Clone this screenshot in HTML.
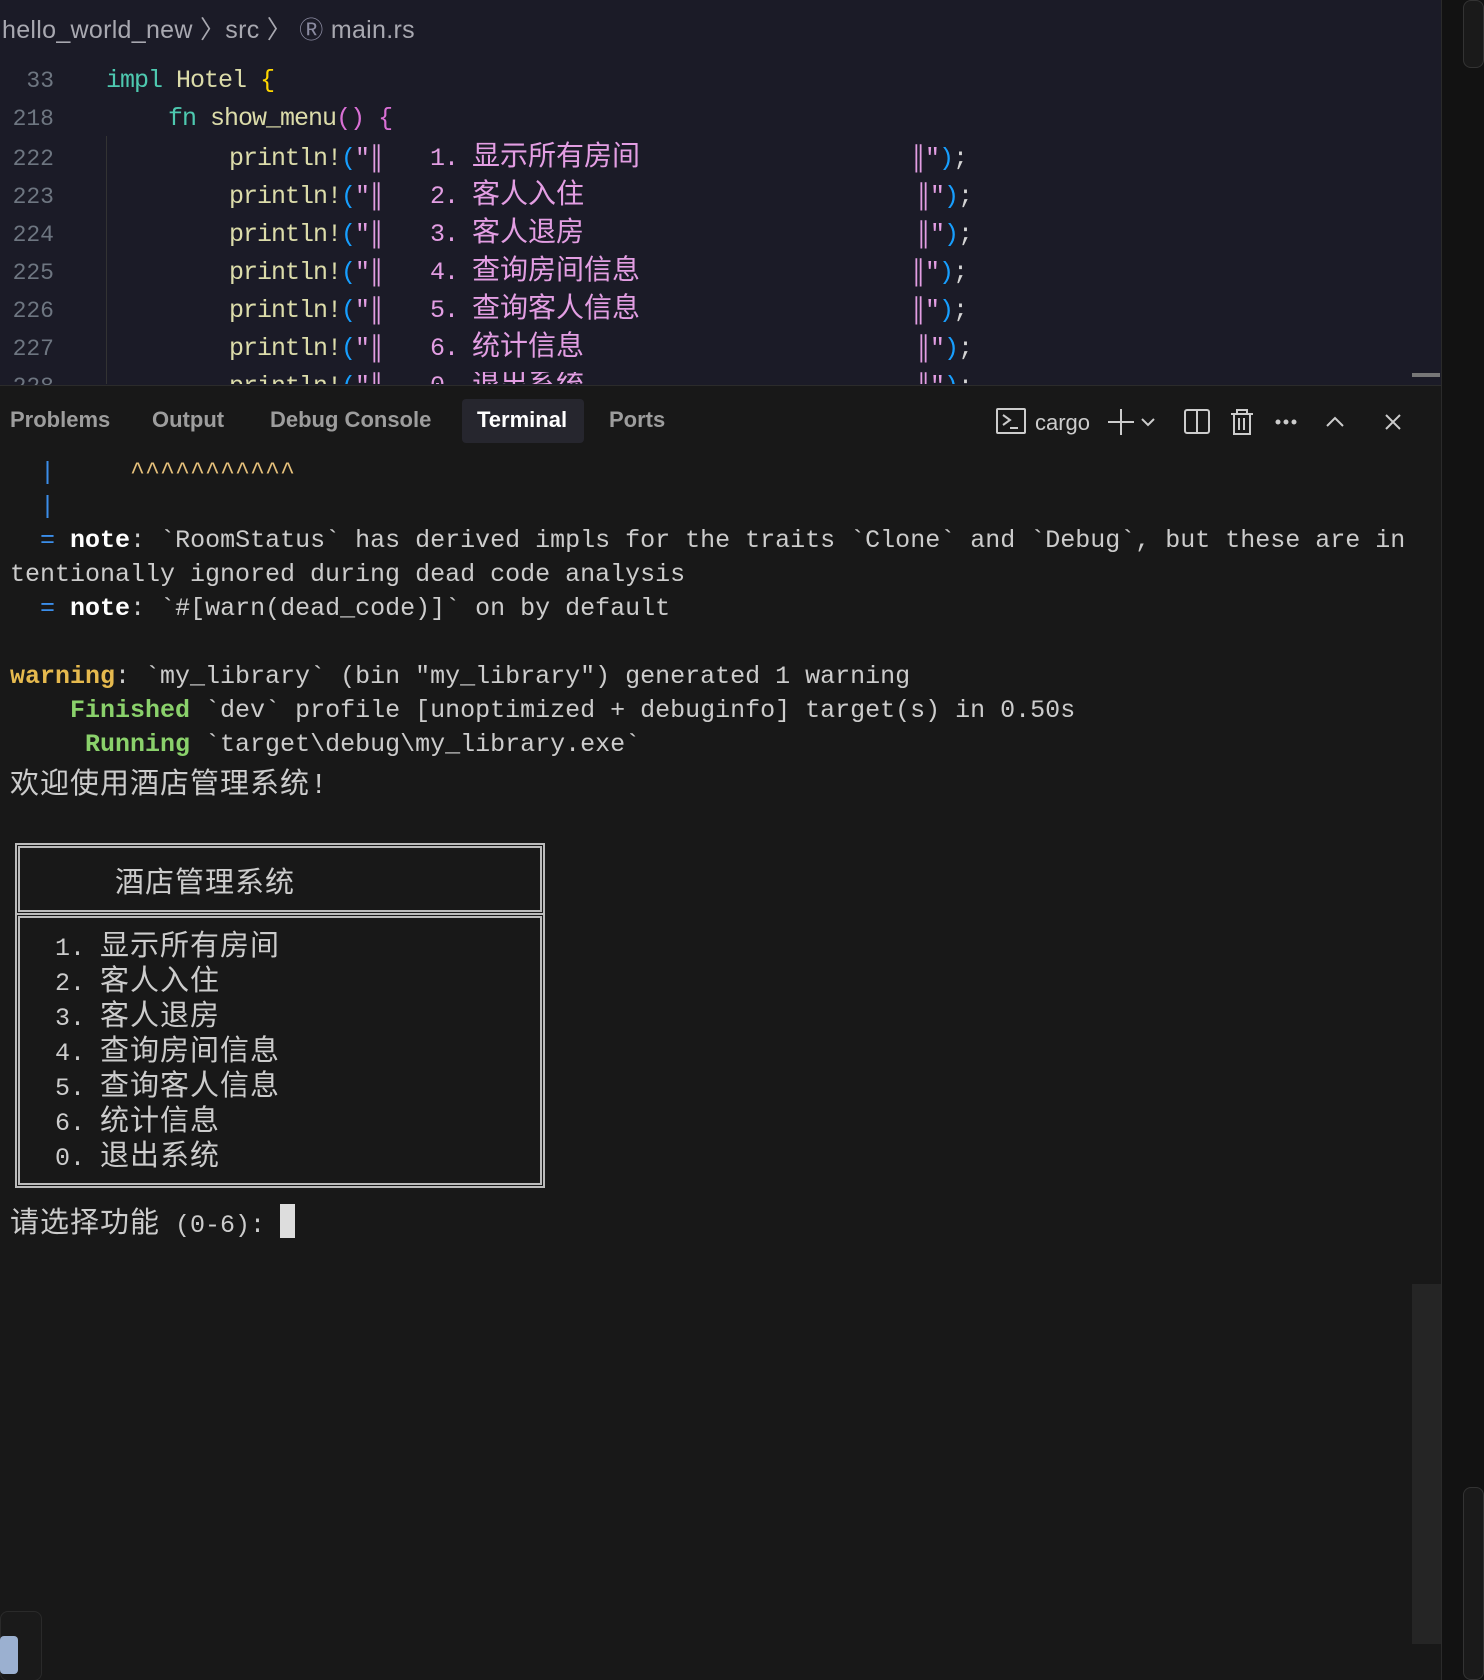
<!DOCTYPE html>
<html><head><meta charset="utf-8"><style>
*{margin:0;padding:0;box-sizing:border-box}
html,body{width:1484px;height:1680px;overflow:hidden;background:#181818;}
body{position:relative;font-family:"Liberation Mono","Noto Sans CJK SC",monospace;color:#cccccc}
.ab{position:absolute;white-space:pre}
#editor{position:absolute;left:0;top:0;width:1441px;height:385px;background:#1b1b27}
.crumb{font-family:"Liberation Sans","Noto Sans CJK SC",sans-serif;font-size:25px;color:#a8a8b0;top:10px;left:2px;letter-spacing:0.3px}
.ln{font-size:23px;color:#6e7681;width:54px;text-align:right;left:0;line-height:36px}
.code{font-size:25px;letter-spacing:-1px;line-height:36px}
.k{color:#4ec9b0}.y{color:#dcdcaa}.g{color:#ffd700}.p{color:#da70d6}.b{color:#179fff}.s{color:#e39ee3}.w{color:#d4d4d4}
.cc{font-size:28px;letter-spacing:0}
#panel{position:absolute;left:0;top:385px;width:1441px;height:1295px;background:#181818;border-top:1px solid #2b2b2b}
.tab{font-family:"Liberation Sans",sans-serif;font-size:22px;color:#9d9d9d;top:21px;font-weight:bold}
.t{font-size:25px;left:10px}
.cj{font-size:29px;letter-spacing:1px}
.bl{color:#3b8eea}.yl{color:#e5c07b}.gr{color:#8ad16b;font-weight:bold}
</style></head><body>
<div id="editor">
<div class="ab crumb">hello_world_new 〉src 〉 <span style="font-size:24px;color:#8a8aa0">Ⓡ</span> main.rs</div>
<div class="ab ln" style="top:63px">33</div>
<div class="ab ln" style="top:101px">218</div>
<div class="ab ln" style="top:141px">222</div>
<div class="ab ln" style="top:179px">223</div>
<div class="ab ln" style="top:217px">224</div>
<div class="ab ln" style="top:255px">225</div>
<div class="ab ln" style="top:293px">226</div>
<div class="ab ln" style="top:331px">227</div>
<div class="ab ln" style="top:369px">228</div>
<div style="position:absolute;left:106px;top:136px;width:1px;height:248px;background:#333"></div>
<div class="ab code" style="left:106px;top:63px"><span class="k">impl</span> <span class="y">Hotel</span> <span class="g">{</span></div>
<div class="ab code" style="left:168px;top:101px"><span class="k">fn</span> <span class="y">show_menu</span><span class="p">()</span> <span class="p">{</span></div>

<div class="ab code" style="left:229px;top:141px"><span class="y">println!</span><span class="b">(</span><span class="s">"║</span></div>
<div class="ab code s" style="left:430px;top:141px">1. <span class="cc">显示所有房间</span></div>
<div class="ab code" style="left:911px;top:141px"><span class="s">║"</span><span class="b">)</span><span class="w">;</span></div>

<div class="ab code" style="left:229px;top:179px"><span class="y">println!</span><span class="b">(</span><span class="s">"║</span></div>
<div class="ab code s" style="left:430px;top:179px">2. <span class="cc">客人入住</span></div>
<div class="ab code" style="left:916px;top:179px"><span class="s">║"</span><span class="b">)</span><span class="w">;</span></div>

<div class="ab code" style="left:229px;top:217px"><span class="y">println!</span><span class="b">(</span><span class="s">"║</span></div>
<div class="ab code s" style="left:430px;top:217px">3. <span class="cc">客人退房</span></div>
<div class="ab code" style="left:916px;top:217px"><span class="s">║"</span><span class="b">)</span><span class="w">;</span></div>

<div class="ab code" style="left:229px;top:255px"><span class="y">println!</span><span class="b">(</span><span class="s">"║</span></div>
<div class="ab code s" style="left:430px;top:255px">4. <span class="cc">查询房间信息</span></div>
<div class="ab code" style="left:911px;top:255px"><span class="s">║"</span><span class="b">)</span><span class="w">;</span></div>

<div class="ab code" style="left:229px;top:293px"><span class="y">println!</span><span class="b">(</span><span class="s">"║</span></div>
<div class="ab code s" style="left:430px;top:293px">5. <span class="cc">查询客人信息</span></div>
<div class="ab code" style="left:911px;top:293px"><span class="s">║"</span><span class="b">)</span><span class="w">;</span></div>

<div class="ab code" style="left:229px;top:331px"><span class="y">println!</span><span class="b">(</span><span class="s">"║</span></div>
<div class="ab code s" style="left:430px;top:331px">6. <span class="cc">统计信息</span></div>
<div class="ab code" style="left:916px;top:331px"><span class="s">║"</span><span class="b">)</span><span class="w">;</span></div>

<div style="position:absolute;left:0;top:372px;width:1441px;height:12px;overflow:hidden">
<div class="ab code" style="left:229px;top:-3px"><span class="y">println!</span><span class="b">(</span><span class="s">"║</span></div>
<div class="ab code s" style="left:430px;top:-3px">0. <span class="cc">退出系统</span></div>
<div class="ab code" style="left:916px;top:-3px"><span class="s">║"</span><span class="b">)</span><span class="w">;</span></div>
</div>
<div style="position:absolute;left:1412px;top:373px;width:28px;height:4px;background:#777"></div>
</div>
<div style="position:absolute;left:1441px;top:0;width:43px;height:1680px;background:#121212;border-left:1px solid #2a2a2a"></div>
<div style="position:absolute;left:1463px;top:0;width:21px;height:68px;border:1px solid #333;border-radius:8px;background:#1a1a1a"></div>
<div style="position:absolute;left:1463px;top:1487px;width:21px;height:193px;border:1px solid #333;border-radius:8px;background:#1a1a1a"></div>
<div id="panel">
<div style="position:absolute;left:462px;top:13px;width:122px;height:44px;background:#26262e;border-radius:4px"></div>
<div class="ab tab" style="left:10px">Problems</div>
<div class="ab tab" style="left:152px">Output</div>
<div class="ab tab" style="left:270px">Debug Console</div>
<div class="ab tab" style="left:477px;color:#fff">Terminal</div>
<div class="ab tab" style="left:609px">Ports</div>
<svg style="position:absolute;left:995px;top:20px" width="420" height="32" viewBox="0 0 420 32" fill="none" stroke="#ccc" stroke-width="2">
<rect x="2" y="3" width="28" height="24" rx="1"/><path d="M8 9l7 5-7 5M15 22h8"/>
<text x="40" y="24" fill="#ccc" stroke="none" font-family="Liberation Sans" font-size="22">cargo</text>
<path d="M126 3v26M113 16h26M147 13l6 6 6-6"/>
<rect x="190" y="4" width="24" height="23" rx="2"/><path d="M202 4v23"/>
<path d="M236 8h22M242 8v-4h10v4M239 8v20h16v-20M244 12v12M249 12v12"/>
<circle cx="283" cy="16" r="1.5" fill="#ccc"/><circle cx="291" cy="16" r="1.5" fill="#ccc"/><circle cx="299" cy="16" r="1.5" fill="#ccc"/>
<path d="M332 20l8-8 8 8M391 9l14 14M405 9l-14 14"/>
</svg>
<div style="position:absolute;left:0;top:72px;width:1441px">
<div class="ab t bl" style="top:0">  |     <span class="yl">^^^^^^^^^^^</span></div>
<div class="ab t bl" style="top:34px">  |</div>
<div class="ab t" style="top:68px">  <span class="bl">=</span> <b style="color:#fff">note</b>: `RoomStatus` has derived impls for the traits `Clone` and `Debug`, but these are in</div>
<div class="ab t" style="top:102px">tentionally ignored during dead code analysis</div>
<div class="ab t" style="top:136px">  <span class="bl">=</span> <b style="color:#fff">note</b>: `#[warn(dead_code)]` on by default</div>
<div class="ab t" style="top:204px"><b style="color:#e5b94e">warning</b>: `my_library` (bin "my_library") generated 1 warning</div>
<div class="ab t" style="top:238px">    <span class="gr">Finished</span> `dev` profile [unoptimized + debuginfo] target(s) in 0.50s</div>
<div class="ab t" style="top:272px">     <span class="gr">Running</span> `target\debug\my_library.exe`</div>
<div class="ab t cj" style="top:302px">欢迎使用酒店管理系统!</div>
</div>
<div style="position:absolute;left:15px;top:457px;width:530px;height:72px;border:5px double #bbb"></div>
<div style="position:absolute;left:15px;top:527px;width:530px;height:275px;border:5px double #bbb"></div>
<div class="ab cj" style="left:115px;top:473px">酒店管理系统</div>
<div class="ab t" style="left:55px;top:545px;line-height:34px">1. <span class="cj">显示所有房间</span>
2. <span class="cj">客人入住</span>
3. <span class="cj">客人退房</span>
4. <span class="cj">查询房间信息</span>
5. <span class="cj">查询客人信息</span>
6. <span class="cj">统计信息</span>
0. <span class="cj">退出系统</span></div>
<div class="ab t" style="top:813px"><span class="cj">请选择功能</span> (0-6): </div>
<div style="position:absolute;left:280px;top:818px;width:15px;height:34px;background:#ddd"></div>
<div style="position:absolute;left:1412px;top:898px;width:29px;height:360px;background:#252525"></div>
<div style="position:absolute;left:0;top:1225px;width:42px;height:70px;border:1px solid #2a2a2a;border-radius:8px;background:#1a1a1a"></div>
<div style="position:absolute;left:0;top:1250px;width:18px;height:38px;background:#9bb0d0;border-radius:4px"></div>
</div>
</body></html>
